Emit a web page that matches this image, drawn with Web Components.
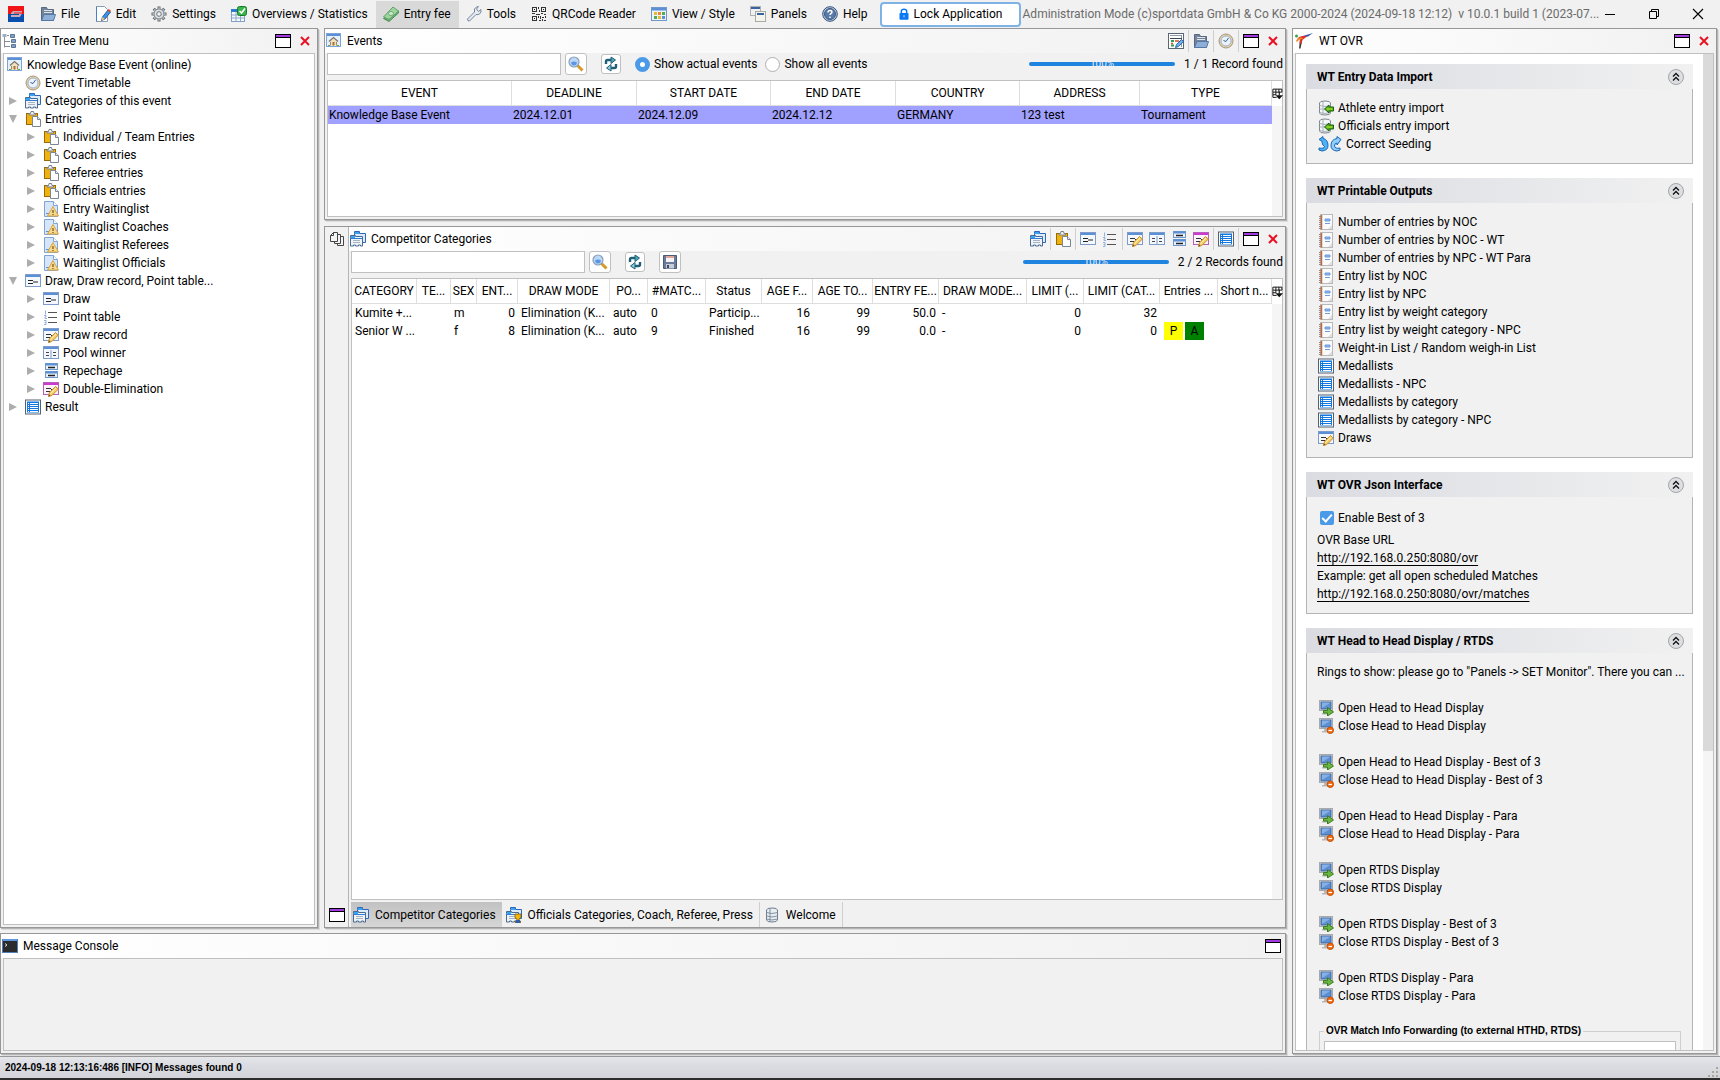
<!DOCTYPE html>
<html lang="en">
<head>
<meta charset="utf-8">
<title>Administration Mode</title>
<style>
  html, body { height: 100%; margin: 0; }
  body {
    --line: #c0c0c0;
    --face: #f1f1f1;
    --edge: #979797;
    font: 12px/18px Roboto, "Open Sans", sans-serif;
    color: #000;
    background: var(--face);
    overflow: hidden;
  }
  sd-app { height: 100%; }
</style>
</head>
<body>
<sd-app></sd-app>

<script>
const BASE = `
  * { box-sizing: border-box; }
  button, input { font: inherit; color: inherit; margin: 0; }
  button { border: 0; padding: 0; background: none; text-align: left; white-space: nowrap; }
`;

// shared icon parts, all on a 16x16 grid
const WIN = '<rect x=".5" y="1.5" width="15" height="12" fill="#f4f8fd" stroke="#7d9cc9"/><rect x="1" y="2" width="14" height="2" fill="#5b8fd6"/>';
const PENCIL = '<path d="M5.5 15.5l.8-3.6L12.5 5.5l2.8 2.6-6.4 6.4z" fill="#f6cf6a" stroke="#c78a28"/><path d="M7.5 12.5l5.5-5.5" stroke="#fff2bd"/><path d="M5.5 15.5l.5-2 1.5 1.3z" fill="#6b4a20"/>';
const FOLDERS = '<path d="M4.5 2.5v-2h5v2h6v9h-11z" fill="#dcebfa" stroke="#2f66b8"/><rect x="5" y="1" width="4" height="2" fill="#35a5f5"/><path d="M.5 6.5v-2h5v1h7v9.5h-2v-1h-2v1h-3v-1h-2v1h-3z" fill="#eef3f8" stroke="#4a6a93"/><rect x="1" y="5" width="4" height="2" fill="#35a5f5"/><path d="M1 7.5h11" stroke="#2f7fd6"/><path d="M3 9.5h7M3 11.5h7" stroke="#a9b4c0"/>';
const MONITOR = '<rect x="1.5" y=".5" width="13" height="10" fill="#e4e4e4" stroke="#a9a9a9"/><rect x="3" y="2" width="10" height="7" fill="#5d8fd3" stroke="#3f679f"/><path d="M4 8l8-5v-.5h-8z" fill="#86b0e6"/><path d="M6 11h4v2h2v1.5h-8v-1.5h2z" fill="#b8b8b8"/>';

const ICONS = {
  sd: '<rect width="16" height="8" fill="#f21414"/><rect width="16" height="8" y="8" fill="#0a4fb0"/><path d="M3 7l2-2h9v1.5h-8v1h8l-2 3.5h-9v-2h8v-1h-8z" fill="#c9a9b5"/>',
  folder: '<path d="M1.5 14.5v-13h5l1 2h6v11z" fill="#73849b" stroke="#56677f"/><path d="M4 4.5h8M4 6.5h8" stroke="#dfe5ec"/><path d="M1.5 14.5l2.5-6h11.5l-2 6z" fill="#8fb0d6" stroke="#5578a6"/>',
  edit: '<path d="M1.5 .5h8l3 3v12h-11z" fill="#fff" stroke="#8a9bb0"/><path d="M1.5 15.5v-15" stroke="#4a80c4"/><path d="M6.5 14.5l1-3.5 5.5-7 2.5 2-5.5 7z" fill="#3c93e8" stroke="#275c9e"/><path d="M12.5 4.5l1.2-1.5 2.3 1.8-1.2 1.5z" fill="#e2472c"/><path d="M6.5 14.5l1-3.5 2.5 2z" fill="#f1c27a"/>',
  gear: '<path d="M8 .5v15M.5 8h15M2.7 2.7l10.6 10.6M13.3 2.7L2.7 13.3" stroke="#5f666d" stroke-width="3"/><path d="M8 1.5v13M1.5 8h13M3.4 3.4l9.2 9.2M12.6 3.4l-9.2 9.2" stroke="#dfe3e6" stroke-width="1.4"/><circle cx="8" cy="8" r="5" fill="#dce0e4" stroke="#7d848b"/><circle cx="8" cy="8" r="2.3" fill="#f1f1f1" stroke="#6d747b"/>',
  stats: '<rect x=".5" y="3.5" width="13" height="12" fill="#f5f9fd" stroke="#7fa0c8"/><rect x="0" y="3" width="7" height="3" fill="#2e7ad0"/><path d="M1 9h13M1 12h13M5 6v9M9.5 6v9" stroke="#8fa9c6"/><rect x="6.5" y=".5" width="9" height="9" rx="2" fill="#39b54a" stroke="#157a28"/><path d="M8.5 5l2 2 3.5-4.5" fill="none" stroke="#fff" stroke-width="1.6"/>',
  money: '<path d="M.5 12.5L6 15.5l9.5-8.5v-2z" fill="#6fae76" stroke="#4a9157"/><path d="M.5 11L10 1l5.5 4L6 13.5z" fill="#9fd49e" stroke="#5fa067"/><ellipse cx="8" cy="7.5" rx="2.5" ry="2" fill="#cdeccb" stroke="#6fae76"/>',
  wrench: '<path d="M1.5 13l7-7q-1-3.5 2-5l2-.5-2 2.5 2 2.5 2.5-2q.5 3-1.5 4.5-1.5 1-3.5.5l-6.5 6.5q-2 .5-2-2z" fill="#e6ebf2" stroke="#76849a"/>',
  qr: '<g fill="none" stroke="#333"><rect x="1.5" y="1.5" width="4" height="4"/><rect x="10.5" y="1.5" width="4" height="4"/><rect x="1.5" y="10.5" width="4" height="4"/><path d="M7.5 1v2M8.5 4v2M1 7.5h3M5 8.5h4M10 7.5h2M13 8.5h2M7.5 10v2M9.5 10v3M11 11.5h2M14.5 10v2M8 14.5h2M11.5 13v2M13 14.5h2"/></g><path d="M3 3h1v1h-1zM12 3h1v1h-1zM3 12h1v1h-1z" fill="#222"/>',
  view: '<rect x=".5" y="1.5" width="15" height="13" fill="#eef4fb" stroke="#6f97cc"/><rect x="1" y="2" width="14" height="2.5" fill="#5b8fd6"/><path d="M3 6h3v3h-3zM7 10h3v3h-3z" fill="#e8b830"/><path d="M7 6h3v3h-3z" fill="#e58a3a"/><path d="M11 6h3v3h-3zM3 10h3v3h-3z" fill="#4fae56"/><path d="M11 10h3v3h-3z" fill="#5b90d8"/>',
  panels: '<rect x=".5" y=".5" width="10" height="9" fill="#eef1f4" stroke="#b0b0b0"/><rect x="1" y="1" width="9" height="2" fill="#3a64a0"/><rect x="5.5" y="5.5" width="10" height="10" fill="#f4f4ee" stroke="#a9a9a0"/><rect x="7" y="7" width="7" height="2" fill="#3a64a0"/>',
  help: '<circle cx="8" cy="8" r="7.3" fill="#c4ced9" stroke="#2f4f7e"/><circle cx="8" cy="8" r="5.5" fill="#5a7aa8" stroke="#3c5a88"/><path d="M6 6.5q0-2 2-2t2 1.500q0 1-1 1.500t-1 1.500M8 10.5v1.5" stroke="#fff" stroke-width="1.4" fill="none"/>',
  lock: '<path d="M4.500 7v-3q0-2.500 3.500-2.500t3.500 2.500v3" fill="none" stroke="#0a78f5" stroke-width="2"/><rect x="2" y="6.5" width="12" height="9" rx="1" fill="#0a78f5"/><path d="M8 9.5v3" stroke="#fff"/>',
  min: '<path d="M3 8.5h10" stroke="#000"/>',
  restore: '<path d="M3.5 5.5h7v7h-7zM5.5 5.5v-2h7v7h-2" fill="none" stroke="#000"/>',
  close: '<path d="M3 3l10 10M13 3L3 13" stroke="#000" stroke-width="1.1"/>',
  max: '<rect x=".5" y="1.5" width="15" height="13" fill="#fff" stroke="#000"/><rect x="1" y="2" width="14" height="2" fill="#a23be0"/><path d="M1 4.5h14" stroke="#000"/>',
  x: '<path d="M4 4l8 8M12 4l-8 8" stroke="#e81224" stroke-width="2"/>',
  tree: '<path d="M2.5 4v10.5M3 8.5h5M3 13.5h5M1 2.5h3" stroke="#8a9097" fill="none"/><path d="M.5 1h4v3h-4z" fill="#9db0c6"/><path d="M5 2.5h2" stroke="#8a9097"/><g fill="#7fa2cc" stroke="#5c7696"><path d="M8.5 1.5h4v3h-4zM9.5 6.5h4v3h-4zM9.5 11.5h4v3h-4z"/></g>',
  home: '<rect x=".5" y=".5" width="14" height="13" fill="#e4f0fb" stroke="#7da4d6"/><rect x="1" y="1" width="13" height="2" fill="#5b8fd6"/><path d="M4 8.5l3.5-3.5 3.5 3.5v4h-7z" fill="#f3e3bd"/><path d="M3 8.5l4.5-4 4.5 4" fill="none" stroke="#7f756d" stroke-width="1.3"/><path d="M4.5 9v3.5M10.5 9v3.5" stroke="#a9865a"/><path d="M6.5 9h2v3.5h-2z" fill="#a5713d"/><path d="M2 12.5h2M11 12.5h2" stroke="#67a844"/>',
  clock: '<circle cx="8" cy="8" r="7" fill="#e3d2ad" stroke="#a8977a"/><circle cx="8" cy="8" r="5" fill="#eaf3fc" stroke="#9fb4cc"/><path d="M8 8.5L10.5 5M8 8.5L5.5 7.5" stroke="#3d5f8e" fill="none"/>',
  folders: FOLDERS,
  officials: FOLDERS + '<path d="M9 7h6v3q-1 2-2 2v2h1.5v2h-5v-2h1.5v-2q-2 0-2-2z" fill="#f2b705" stroke="#6b4b00" stroke-width=".7"/><path d="M10 13h4v3h-4z" fill="#2b5fa8"/>',
  clipboard: '<rect x="1.5" y="2.5" width="11" height="11" fill="#eeb211" stroke="#9a6a08"/><path d="M4 4V2.5h1.5l.5-2h2.5l.5 2H10.5V4z" fill="#f2f2f2" stroke="#77808a"/><path d="M7.5 5.5h5l3 3v7h-8z" fill="#fff" stroke="#7d8794"/><path d="M12.5 5.5v3h3" fill="#e8ecf1" stroke="#7d8794"/>',
  warn: '<path d="M1.5 .5h9l4 4v11h-13z" fill="#d6e6f8" stroke="#7ea5d6"/><path d="M10.5 .5v4h4" fill="#fff" stroke="#7ea5d6"/><path d="M3 12.5h4" stroke="#5b90d8"/><path d="M10 5.5l5.5 9.5h-11z" fill="#f5d98f" stroke="#d9a441"/><path d="M10 9v3M10 13v1" stroke="#7a4f0d" stroke-width="1.2"/>',
  draw: WIN + '<path d="M3 7.5h5M3 10.5h5M8 9h5" stroke="#222" stroke-width="1.2"/>',
  points: '<path d="M5 3.5h9M5 8.5h9M5 13.5h9" stroke="#555"/><path d="M2.5 1.5v4M1 6.5h2v1.5h-1v1.5h2M1 11.5h2v4h-2M1.5 13.5h1.5" stroke="#8fb0e0" fill="none"/>',
  record: WIN + '<path d="M3 7.5h5M3 10.5h4M8 8.5h5" stroke="#333" stroke-width="1.2"/>' + PENCIL,
  pool: WIN + '<path d="M8 5v8.5" stroke="#7d9cc9"/><path d="M3 7.5h3M3 10.5h3M10 7.5h3M10 10.5h3" stroke="#444"/>',
  repechage: '<rect x="2.5" y=".5" width="12" height="6" fill="#eaf1fa" stroke="#6f97cc"/><rect x="2.5" y="8.5" width="12" height="6" fill="#eaf1fa" stroke="#6f97cc"/><path d="M3 1.5h11M3 9.5h11" stroke="#5b8fd6" stroke-width="2"/><path d="M5 4.5h7M5 12.5h7" stroke="#222" stroke-width="1.3"/>',
  double: '<rect x=".5" y="1.5" width="15" height="12" fill="#fbf4fb" stroke="#b65fb8"/><rect x="1" y="2" width="14" height="2" fill="#cc39cf"/><path d="M3 7.5h5M3 10.5h4M8 8.5h5" stroke="#333" stroke-width="1.2"/>' + PENCIL,
  result: '<rect x=".5" y="1" width="15" height="14" fill="#fff" stroke="#55616f"/><rect x="2" y="2.5" width="12" height="11" fill="#1277e0"/><path d="M5 4.5h8M5 6.5h8M5 8.5h8M5 10.5h8M5 12.5h8M3 4.5h1M3 6.5h1M3 8.5h1M3 10.5h1M3 12.5h1" stroke="#fff"/>',
  form: '<rect x=".5" y=".5" width="15" height="15" fill="#fff" stroke="#5c6670"/><path d="M2 2.5h12M13.5 2v12" stroke="#8d99a6"/><path d="M2 5.5h12" stroke="#3c4650"/><path d="M3 8h3M3 12.500h3" stroke="#31a048" stroke-width="2"/><path d="M3 10.5h2M7 8h4" stroke="#d94a35" stroke-width="1.500"/><path d="M7.5 14.500l1-3 5-5 2 2-5 5z" fill="#6db1f0" stroke="#2b62a8"/>',
  search: '<path d="M9.5 9.5l5 5" stroke="#d69a2a" stroke-width="3"/><circle cx="6" cy="6" r="5" fill="#b9d7f7" stroke="#8c9fb8" stroke-width="1.2"/><path d="M3 6.5q3-2 6 0q-.5 3-3 3t-3-3z" fill="#5b96e2"/>',
  refresh: '<path d="M3 8V5.5q0-1.5 1.5-1.5H9" fill="none" stroke="#1f6078" stroke-width="2.4"/><path d="M8 1l4.5 3L8 7.5z" fill="#4fa3b8" stroke="#1f6078"/><path d="M13 8v2.5q0 1.500-1.500 1.500H7" fill="none" stroke="#1f6078" stroke-width="2.4"/><path d="M8 8.5L3.5 12 8 15z" fill="#8fcbd8" stroke="#1f6078"/>',
  save: '<path d="M1.5 1.5h13v13h-13z" fill="#6b7c9a" stroke="#4a5b7a"/><rect x="4" y="2" width="8" height="6" fill="#f4f4f4"/><path d="M4 3h8" stroke="#d0563c"/><rect x="4" y="10" width="8" height="4.5" fill="#c9ced6"/><path d="M6 11v3" stroke="#374969" stroke-width="2"/>',
  dbimport: '<path d="M1.5 3q0-2 5.5-2t5.5 2v10q0 2-5.5 2t-5.5-2z" fill="#f4f5f7" stroke="#7d8790"/><path d="M1.5 5.5q5.5 2 11 0M1.5 9h11M1.5 12.5q5.5 2 11 0M5 2v12" fill="none" stroke="#a8b1ba"/><path d="M6.5 9l4.5-4v2h4.5v4h-4.500v2z" fill="#49b31a" stroke="#1d5f0b"/><path d="M8.5 9h6" stroke="#d5e632"/>',
  report: '<rect x="2.5" y=".5" width="12" height="15" fill="#fbfbfb" stroke="#b9b9b9"/><path d="M3.5 1v14.5" stroke="#c4683c" stroke-width="1.5"/><path d="M1 2.5h2M1 4.5h2M1 6.5h2M1 8.5h2M1 10.5h2M1 12.5h2M1 14.5h2" stroke="#8c8c8c"/><path d="M7 5h5v2h-5z" fill="#8fb2e6" stroke="#6f9ee0"/><path d="M7 9.5h5" stroke="#6f9ee0"/><path d="M14 11v4h-4z" fill="#dfdfdf"/>',
  monopen: MONITOR + '<path d="M5.5 10.5h4v-3l6 4.5-6 4v-3h-4z" fill="#6ab543" stroke="#3a7f1a"/>',
  monclose: MONITOR + '<circle cx="12.3" cy="12.3" r="3.2" fill="#ef6c12" stroke="#c64f06"/><path d="M10.5 12.5h3.5" stroke="#fff" stroke-width="1.2"/>',
  console: '<rect x=".5" y="1.5" width="15" height="13" fill="#2b2b2b" stroke="#4f7fb8"/><rect x="1" y="1" width="14" height="2" fill="#5f97dd"/><path d="M3 5.5l2 1.5-2 1.5" stroke="#ddd" fill="none"/>',
  pages: '<g fill="#f5f5f5" stroke="#444"><path d="M8.5 5.5h6v9h-6z"/><path d="M5.5 3.5h6v9h-6z"/><path d="M4.5 1.5h4v9h-7v-6z"/><path d="M1.5 4.5h3v-3" fill="none"/></g>',
  db: '<path d="M2.5 3q0-2 5.5-2t5.5 2v10q0 2-5.5 2t-5.5-2z" fill="#e8edf2" stroke="#6f7f90"/><path d="M2.5 5.5q5.5 2 11 0M2.5 9q5.5 2 11 0M2.5 12q5.5 2 11 0M6 1.5v13" fill="none" stroke="#8291a2"/>',
  chevrons: '<circle cx="8" cy="8" r="7.5" fill="#dcdee2" stroke="#a5a5a8"/><path d="M5 7.5l3-3 3 3M5 11.5l3-3 3 3" fill="none" stroke="#111" stroke-width="1.3"/>',
  seeding: '<path d="M1 3.5l4-3v2q5 1 5 7 0 5-6 5.5l-3-1v-2q5 1 5.5-1.5-2-1-2.5-4v-1.5z" fill="#4fb2f5" stroke="#1766b8"/><path d="M23 3.5l-4-3v2q-6 1-6 7 0 5 6 5.5l3-1v-2q-5 1-5.5-2 0-3 2.5-3v2z" fill="#8fd0fb" stroke="#1766b8"/>',
  wt: '<path d="M7 3.5L19 0l-5 3.5-5 1z" fill="#3a55a5"/><path d="M3 5.5q3-3 7-2.5l3 .5-4 3z" fill="#e0312c"/><path d="M2 8q2-4 6-3.5L9 6Q5 6 3 9z" fill="#f08a1d"/><path d="M8.5 6L6.5 15.5H5L6 7z" fill="#3d3836"/><path d="M6 6.5l2.5-.5-1 4.5-2 .5z" fill="#e0312c"/><circle cx="2.5" cy="3" r="1.5" fill="#39a34a"/>',
  colmenu: '<path d="M2.5 1.5h12v4h-12zM6.5 1.5v8M10.5 1.5v4M2.5 5.5v7h5M2.5 9h4" fill="none" stroke="#111" stroke-width="1.3"/><path d="M6 9.5h10l-5 5.5z" fill="#111"/><path d="M11 5v5" stroke="#111" stroke-width="1.5"/>'
};
const WIDE = { seeding: 24, wt: 20 };

class SdIcon extends HTMLElement {
  constructor() {
    super();
    this.attachShadow({ mode: 'open' });
  }

  connectedCallback() {
    const name = this.getAttribute('name');
    const width = WIDE[name] || 16;
    this.shadowRoot.innerHTML = `
      <style>
        :host { display: block; flex: none; width: ${width}px; height: 16px; }
        :host([size="small"]) { width: 12px; height: 14px; }
        svg { display: block; width: 100%; height: 100%; }
      </style>
      <svg viewBox="0 0 ${width} 16" fill="none" aria-hidden="true">${ICONS[name]}</svg>
    `;
  }
}
customElements.define('sd-icon', SdIcon);

class MenuItem extends HTMLElement {
  constructor() {
    super();
    this.attachShadow({ mode: 'open' });
  }

  connectedCallback() {
    this.shadowRoot.innerHTML = `
      <style>
        ${BASE}
        :host { display: block; flex: none; }
        button { display: flex; align-items: center; gap: 5px; height: 27px; padding: 0 8px 0 7px; }
        :host([active]) button { background: #d9d9d9; }
      </style>
      <button type="button"><sd-icon name="${this.getAttribute('icon')}"></sd-icon><slot></slot></button>
    `;
  }
}
customElements.define('menu-item', MenuItem);

class MenuBar extends HTMLElement {
  constructor() {
    super();
    this.attachShadow({ mode: 'open' });
  }

  connectedCallback() {
    this.shadowRoot.innerHTML = `
      <style>
        ${BASE}
        :host { display: flex; align-items: center; height: 28px; }
        .logo { margin: 0 9px 0 8px; }
        .lock {
          display: flex; align-items: center; justify-content: center; gap: 4px; flex: none;
          width: 141px; height: 25px; margin-left: 4px;
          border: 2px solid #7fb3e6; border-radius: 4px; background: #fff;
        }
        .mode { flex: 1; min-width: 0; padding-left: 2px; color: #6b6b6b; white-space: pre; overflow: hidden; }
        .window { display: flex; flex: none; gap: 28px; padding-right: 14px; }
      </style>
      <sd-icon class="logo" name="sd"></sd-icon>
      <menu-item icon="folder">File</menu-item>
      <menu-item icon="edit">Edit</menu-item>
      <menu-item icon="gear">Settings</menu-item>
      <menu-item icon="stats">Overviews / Statistics</menu-item>
      <menu-item icon="money" active>Entry fee</menu-item>
      <menu-item icon="wrench">Tools</menu-item>
      <menu-item icon="qr">QRCode Reader</menu-item>
      <menu-item icon="view">View / Style</menu-item>
      <menu-item icon="panels">Panels</menu-item>
      <menu-item icon="help">Help</menu-item>
      <button type="button" class="lock"><sd-icon size="small" name="lock"></sd-icon>Lock Application</button>
      <span class="mode">Administration Mode (c)sportdata GmbH &amp; Co KG 2000-2024 (2024-09-18 12:12)  v 10.0.1 build 1 (2023-07...</span>
      <div class="window">
        <button type="button" aria-label="Minimize"><sd-icon name="min"></sd-icon></button>
        <button type="button" aria-label="Restore"><sd-icon name="restore"></sd-icon></button>
        <button type="button" aria-label="Close"><sd-icon name="close"></sd-icon></button>
      </div>
    `;
  }
}
customElements.define('menu-bar', MenuBar);

// tools="a b | c" : icon buttons, a bar draws a separator
class DockPanel extends HTMLElement {
  constructor() {
    super();
    this.attachShadow({ mode: 'open' });
  }

  connectedCallback() {
    const tools = (this.getAttribute('tools') || '').split(' ').filter(Boolean)
      .map((t) => t === '|' ? '<i></i>' : `<button type="button" aria-label="${t}"><sd-icon name="${t}"></sd-icon></button>`)
      .join('');
    this.shadowRoot.innerHTML = `
      <style>
        ${BASE}
        :host {
          display: flex; min-width: 0; min-height: 0;
          border: 1px solid var(--edge);
          box-shadow: 1px 1px 0 #b4b4b4, 2px 2px 0 #dcdcdc;
          background: var(--face);
        }
        .main { display: flex; flex-direction: column; flex: 1; min-width: 0; }
        header {
          display: flex; align-items: center; flex: none; height: 24px; padding: 0 1px;
          background: linear-gradient(90deg, #fff, var(--face));
        }
        h2 { flex: 1; margin: 0 0 0 5px; font: inherit; white-space: nowrap; }
        header button { padding: 0 3px; }
        header i { width: 1px; height: 22px; margin: 0 1px; background: #cfcfcf; }
        .body { display: flex; flex-direction: column; flex: 1; min-height: 0; padding: 0 2px 2px; }
      </style>
      <slot name="side"></slot>
      <div class="main">
        <header>
          <sd-icon name="${this.getAttribute('icon')}"></sd-icon>
          <h2>${this.getAttribute('label')}</h2>
          ${tools}
        </header>
        <div class="body"><slot></slot></div>
      </div>
    `;
  }
}
customElements.define('dock-panel', DockPanel);

class TreeItem extends HTMLElement {
  constructor() {
    super();
    this.attachShadow({ mode: 'open' });
  }

  connectedCallback() {
    const level = Number(this.getAttribute('level') || 0);
    const state = this.getAttribute('state');
    const arrow = state
      ? `<button type="button" aria-label="Toggle"><svg width="8" height="10" viewBox="0 0 8 10"><path d="${state === 'open' ? 'M0 1h8l-4 8z' : 'M0 1l8 4-8 4z'}" fill="#adadad"/></svg></button>`
      : '<span class="gap"></span>';
    this.shadowRoot.innerHTML = `
      <style>
        ${BASE}
        :host { display: flex; align-items: center; height: 18px; padding-left: ${level * 18 - 13}px; white-space: nowrap; }
        :host([level="0"]) { padding-left: 3px; }
        :host([level="0"]) .gap { display: none; }
        button, .gap { display: flex; align-items: center; width: 16px; height: 18px; }
        sd-icon { margin-right: 4px; }
      </style>
      ${arrow}<sd-icon name="${this.getAttribute('icon')}"></sd-icon><span><slot></slot></span>
    `;
  }
}
customElements.define('tree-item', TreeItem);

class MainTree extends HTMLElement {
  constructor() {
    super();
    this.attachShadow({ mode: 'open' });
  }

  connectedCallback() {
    const rows = [
      [0, 'home', '', 'Knowledge Base Event (online)'],
      [1, 'clock', '', 'Event Timetable'],
      [1, 'folders', 'closed', 'Categories of this event'],
      [1, 'clipboard', 'open', 'Entries'],
      [2, 'clipboard', 'closed', 'Individual / Team Entries'],
      [2, 'clipboard', 'closed', 'Coach entries'],
      [2, 'clipboard', 'closed', 'Referee entries'],
      [2, 'clipboard', 'closed', 'Officials entries'],
      [2, 'warn', 'closed', 'Entry Waitinglist'],
      [2, 'warn', 'closed', 'Waitinglist Coaches'],
      [2, 'warn', 'closed', 'Waitinglist Referees'],
      [2, 'warn', 'closed', 'Waitinglist Officials'],
      [1, 'draw', 'open', 'Draw, Draw record, Point table...'],
      [2, 'draw', 'closed', 'Draw'],
      [2, 'points', 'closed', 'Point table'],
      [2, 'record', 'closed', 'Draw record'],
      [2, 'pool', 'closed', 'Pool winner'],
      [2, 'repechage', 'closed', 'Repechage'],
      [2, 'double', 'closed', 'Double-Elimination'],
      [1, 'result', 'closed', 'Result']
    ];
    this.shadowRoot.innerHTML = `
      <style>
        ${BASE}
        :host { display: block; flex: 1; padding: 2px 0; border: 1px solid var(--line); background: #fff; overflow: hidden; }
      </style>
      ${rows.map(([level, icon, state, text]) => `<tree-item level="${level}" icon="${icon}" state="${state}">${text}</tree-item>`).join('')}
    `;
  }
}
customElements.define('main-tree', MainTree);

class SearchBar extends HTMLElement {
  constructor() {
    super();
    this.attachShadow({ mode: 'open' });
  }

  connectedCallback() {
    this.shadowRoot.innerHTML = `
      <style>
        ${BASE}
        :host { display: flex; align-items: center; flex: none; height: 22px; white-space: nowrap; }
        input { width: 234px; height: 22px; padding: 0 4px; border: 1px solid var(--line); background: #fff; outline: 0; }
        button {
          display: flex; align-items: center; justify-content: center;
          width: 22px; height: 22px; margin-left: 14px;
          border: 1px solid var(--line); border-radius: 3px; background: #fff;
        }
        .find { margin-left: 4px; }
        .narrow { width: 20px; height: 20px; }
        ::slotted(*) { margin-left: 14px; }
        .bar {
          width: 146px; height: 4px; margin-left: auto; border-radius: 2px;
          background: #1f83e0; color: var(--face); font-size: 10px; line-height: 4px; text-align: center;
        }
        .count { margin-left: 9px; }
      </style>
      <input type="text" aria-label="Search">
      <button type="button" class="find" aria-label="Find"><sd-icon name="search"></sd-icon></button>
      <button type="button" class="narrow" aria-label="Refresh"><sd-icon name="refresh"></sd-icon></button>
      ${this.hasAttribute('save') ? '<button type="button" aria-label="Save"><sd-icon name="save"></sd-icon></button>' : ''}
      <slot></slot>
      <div class="bar">100%</div>
      <span class="count">${this.getAttribute('count')}</span>
    `;
  }
}
customElements.define('search-bar', SearchBar);

class EventFilter extends HTMLElement {
  constructor() {
    super();
    this.attachShadow({ mode: 'open' });
  }

  connectedCallback() {
    this.shadowRoot.innerHTML = `
      <style>
        ${BASE}
        :host { display: flex; gap: 8px; }
        label { display: flex; align-items: center; gap: 4px; }
        input { appearance: none; width: 15px; height: 15px; border: 1px solid #b0b0b0; border-radius: 50%; background: #fff; }
        input:checked { border: 5px solid #4a9ae8; }
      </style>
      <label><input type="radio" name="scope" checked>Show actual events</label>
      <label><input type="radio" name="scope">Show all events</label>
    `;
  }
}
customElements.define('event-filter', EventFilter);

// column: [title, width, align]
const TABLES = {
  events: {
    cols: [['EVENT', 184], ['DEADLINE', 125], ['START DATE', 134], ['END DATE', 125], ['COUNTRY', 124], ['ADDRESS', 120], ['TYPE', 132]],
    rows: [['Knowledge Base Event', '2024.12.01', '2024.12.09', '2024.12.12', 'GERMANY', '123 test', 'Tournament']]
  },
  categories: {
    cols: [['CATEGORY', 65], ['TE...', 34], ['SEX', 26], ['ENT...', 41, 'r'], ['DRAW MODE', 92], ['PO...', 38], ['#MATC...', 58], ['Status', 56],
      ['AGE F...', 51, 'r'], ['AGE TO...', 60, 'r'], ['ENTRY FE...', 66, 'r'], ['DRAW MODE...', 88], ['LIMIT (...', 57, 'r'], ['LIMIT (CAT...', 76, 'r'], ['Entries ...', 58], ['Short n...', 54]],
    rows: [
      ['Kumite +...', '', 'm', '0', 'Elimination (K...', 'auto', '0', 'Particip...', '16', '99', '50.0', '-', '0', '32', '', ''],
      ['Senior W ...', '', 'f', '8', 'Elimination (K...', 'auto', '9', 'Finished', '16', '99', '0.0', '-', '0', '0', '<b class="p">P</b><b class="a">A</b>', '']
    ]
  }
};

class DataTable extends HTMLElement {
  constructor() {
    super();
    this.attachShadow({ mode: 'open' });
  }

  connectedCallback() {
    const { cols, rows } = TABLES[this.getAttribute('source')];
    const head = cols.map(([title, width]) => `<th scope="col" style="width: ${width}px">${title}</th>`).join('');
    const body = rows.map((row) => `<tr>${row.map((cell, i) => `<td class="${cols[i][2] || ''}">${cell}</td>`).join('')}</tr>`).join('');
    this.shadowRoot.innerHTML = `
      <style>
        ${BASE}
        :host { display: flex; align-items: stretch; flex: 1; min-height: 0; border: 1px solid var(--line); background: #fff; }
        .scroll { flex: 1; min-width: 0; overflow: hidden; }
        table { width: 100%; table-layout: fixed; border-collapse: separate; border-spacing: 0; }
        th { height: 25px; padding: 0; border-right: 1px solid #dedede; border-bottom: 1px solid #dedede; font-weight: normal; white-space: nowrap; }
        td { height: 18px; padding: 0 3px; line-height: 18px; white-space: nowrap; }
        .r { text-align: right; }
        :host([source="events"]) td { padding: 0 1px; background: #a0a0ff; }
        b { display: inline-block; height: 18px; width: 19px; margin: 0 1px; font-weight: normal; text-align: center; }
        .p { background: #ff0; }
        .a { background: #008000; }
        .track { flex: none; width: 10px; background: #f5f5f5; }
        .track button { display: flex; align-items: center; justify-content: center; width: 10px; height: 25px; background: #fff; }
      </style>
      <div class="scroll"><table><thead><tr>${head}</tr></thead><tbody>${body}</tbody></table></div>
      <div class="track"><button type="button" aria-label="Columns"><sd-icon size="small" name="colmenu"></sd-icon></button></div>
    `;
  }
}
customElements.define('data-table', DataTable);

class EditorTabs extends HTMLElement {
  constructor() {
    super();
    this.attachShadow({ mode: 'open' });
  }

  connectedCallback() {
    this.shadowRoot.innerHTML = `
      <style>
        ${BASE}
        :host { display: flex; flex: none; padding-top: 2px; margin-bottom: -2px; }
        button { display: flex; align-items: center; gap: 6px; height: 25px; padding: 0 6px 0 2px; margin-right: 2px; border-right: 1px solid #cfcfcf; }
        .on { background: linear-gradient(#c2c2c2, #d6d6d6); border: 0; }
      </style>
      <button type="button" class="on"><sd-icon name="folders"></sd-icon>Competitor Categories</button>
      <button type="button"><sd-icon name="officials"></sd-icon>Officials Categories, Coach, Referee, Press</button>
      <button type="button"><sd-icon name="db"></sd-icon>Welcome</button>
    `;
  }
}
customElements.define('editor-tabs', EditorTabs);

class SideStrip extends HTMLElement {
  constructor() {
    super();
    this.attachShadow({ mode: 'open' });
  }

  connectedCallback() {
    this.shadowRoot.innerHTML = `
      <style>
        ${BASE}
        :host { display: flex; flex-direction: column; justify-content: space-between; flex: none; width: 24px; padding: 4px; border-right: 1px solid #b4b4b4; }
      </style>
      <button type="button" aria-label="Pages"><sd-icon name="pages"></sd-icon></button>
      <button type="button" aria-label="Restore"><sd-icon name="max"></sd-icon></button>
    `;
  }
}
customElements.define('side-strip', SideStrip);

class TaskGroup extends HTMLElement {
  constructor() {
    super();
    this.attachShadow({ mode: 'open' });
  }

  connectedCallback() {
    this.shadowRoot.innerHTML = `
      <style>
        ${BASE}
        :host { display: block; flex: none; }
        header { display: flex; align-items: center; height: 25px; padding: 0 9px 0 11px; background: linear-gradient(90deg, #dadce2, #f1f1f1); }
        h3 { flex: 1; margin: 0; font-size: 12px; line-height: 18px; font-weight: bold; }
        .body { padding: 10px; border: 1px solid #b4b4b4; border-top: 0; background: var(--face); }
      </style>
      <header><h3>${this.getAttribute('label')}</h3><button type="button" aria-label="Collapse"><sd-icon name="chevrons"></sd-icon></button></header>
      <div class="body"><slot></slot></div>
    `;
  }
}
customElements.define('task-group', TaskGroup);

class TaskItem extends HTMLElement {
  constructor() {
    super();
    this.attachShadow({ mode: 'open' });
  }

  connectedCallback() {
    this.shadowRoot.innerHTML = `
      <style>
        ${BASE}
        :host { display: block; }
        :host([last]) { margin-bottom: 18px; }
        button { display: flex; align-items: center; gap: 4px; height: 18px; padding-left: 1px; }
      </style>
      <button type="button"><sd-icon name="${this.getAttribute('icon')}"></sd-icon><slot></slot></button>
    `;
  }
}
customElements.define('task-item', TaskItem);

class TaskPane extends HTMLElement {
  constructor() {
    super();
    this.attachShadow({ mode: 'open' });
  }

  connectedCallback() {
    const items = (icon, list) => list.map((t) => `<task-item icon="${icon}">${t}</task-item>`).join('');
    const displays = ['Head to Head Display', 'Head to Head Display - Best of 3', 'Head to Head Display - Para',
      'RTDS Display', 'RTDS Display - Best of 3', 'RTDS Display - Para'];
    this.shadowRoot.innerHTML = `
      <style>
        ${BASE}
        :host { display: flex; flex: 1; min-height: 0; border: 1px solid var(--line); background: #fff; }
        .list { display: flex; flex-direction: column; gap: 14px; flex: 1; min-width: 0; padding: 10px; overflow: hidden; }
        .track { flex: none; width: 10px; background: #f5f5f5; }
        .thumb { height: 70%; background: #dadada; }
        label.check { display: flex; align-items: center; gap: 4px; margin: 0 0 4px 3px; padding-top: 2px; }
        .check input { appearance: none; width: 14px; height: 14px; border-radius: 2px; background: #4a9ae8; display: grid; place-content: center; }
        .check input:checked::after { content: ""; width: 8px; height: 4px; border: solid #fff; border-width: 0 0 2px 2px; transform: rotate(-48deg); margin-bottom: 3px; }
        a { color: #000; text-decoration: underline; text-underline-offset: 3px; }
        p { margin: 0; white-space: nowrap; }
        .hint { margin-bottom: 18px; }
        fieldset { margin: 8px 0 0 2px; padding: 2px 4px; border: 1px solid #cfcfcf; width: 362px; max-width: 100%; }
        legend { padding: 0 2px; font: bold 10px/16px "Liberation Sans", sans-serif; }
        fieldset input { display: block; width: 100%; height: 22px; border: 1px solid var(--line); background: #fff; }
      </style>
      <div class="list">
        <task-group label="WT Entry Data Import">
          ${items('dbimport', ['Athlete entry import', 'Officials entry import'])}
          <task-item icon="seeding">Correct Seeding</task-item>
        </task-group>
        <task-group label="WT Printable Outputs">
          ${items('report', ['Number of entries by NOC', 'Number of entries by NOC - WT', 'Number of entries by NPC - WT Para', 'Entry list by NOC',
            'Entry list by NPC', 'Entry list by weight category', 'Entry list by weight category - NPC', 'Weight-in List / Random weigh-in List'])}
          ${items('result', ['Medallists', 'Medallists - NPC', 'Medallists by category', 'Medallists by category - NPC'])}
          <task-item icon="record">Draws</task-item>
        </task-group>
        <task-group label="WT OVR Json Interface">
          <label class="check"><input type="checkbox" checked>Enable Best of 3</label>
          <p>OVR Base URL</p>
          <p><a href="#ovr">http://192.168.0.250:8080/ovr</a></p>
          <p>Example: get all open scheduled Matches</p>
          <p><a href="#matches">http://192.168.0.250:8080/ovr/matches</a></p>
        </task-group>
        <task-group label="WT Head to Head Display / RTDS">
          <p class="hint">Rings to show: please go to "Panels -&gt; SET Monitor". There you can ...</p>
          ${displays.map((d) => `<task-item icon="monopen">Open ${d}</task-item><task-item icon="monclose" last>Close ${d}</task-item>`).join('')}
          <fieldset>
            <legend>OVR Match Info Forwarding (to external HTHD, RTDS)</legend>
            <input type="text" aria-label="OVR Match Info Forwarding">
          </fieldset>
        </task-group>
      </div>
      <div class="track"><div class="thumb"></div></div>
    `;
  }
}
customElements.define('task-pane', TaskPane);

class StatusBar extends HTMLElement {
  constructor() {
    super();
    this.attachShadow({ mode: 'open' });
  }

  connectedCallback() {
    this.shadowRoot.innerHTML = `
      <style>
        :host {
          display: flex; align-items: center; justify-content: space-between; flex: none;
          box-sizing: border-box; height: 24px; padding: 1px 0 0 5px;
          border-top: 1px solid var(--edge); border-bottom: 2px solid #2c2c2c;
          background: linear-gradient(#e6e7ea, #dcdee4 30%, #d2d4d9);
          font: bold 10px/16px "Liberation Sans", sans-serif;
        }
        svg { align-self: flex-end; }
      </style>
      <span><slot></slot></span>
      <svg width="12" height="12" fill="#a9a79a"><path d="M8 1h2v2h-2zM4 5h2v2h-2zM8 5h2v2h-2zM0 9h2v2h-2zM4 9h2v2h-2zM8 9h2v2h-2z"/></svg>
    `;
  }
}
customElements.define('status-bar', StatusBar);

class SdApp extends HTMLElement {
  constructor() {
    super();
    this.attachShadow({ mode: 'open' });
  }

  connectedCallback() {
    this.shadowRoot.innerHTML = `
      <style>
        ${BASE}
        :host { display: flex; flex-direction: column; }
        .desk {
          display: grid; flex: 1; min-height: 0; gap: 5px 6px; padding: 0 3px 2px 0;
          grid-template-columns: 318px minmax(0, 1fr) 425px;
          grid-template-rows: minmax(0, 1fr) 121px;
        }
        .center { display: grid; grid-template-rows: 192px minmax(0, 1fr); gap: 6px; min-height: 0; min-width: 0; }
        .console { grid-column: 1 / 3; grid-row: 2; }
        .ovr { grid-column: 3; grid-row: 1 / 3; }
        .messages { flex: 1; border: 1px solid var(--line); }
        .center data-table { margin-top: 5px; }
      </style>
      <menu-bar></menu-bar>
      <div class="desk">
        <dock-panel icon="tree" label="Main Tree Menu" tools="max x"><main-tree></main-tree></dock-panel>
        <div class="center">
          <dock-panel icon="home" label="Events" tools="form | folder | clock | max x">
            <search-bar count="1 / 1 Record found"><event-filter></event-filter></search-bar>
            <data-table source="events"></data-table>
          </dock-panel>
          <dock-panel icon="folders" label="Competitor Categories" tools="folders | clipboard | draw points | record pool repechage double | result | max x">
            <side-strip slot="side"></side-strip>
            <search-bar save count="2 / 2 Records found"></search-bar>
            <data-table source="categories"></data-table>
            <editor-tabs></editor-tabs>
          </dock-panel>
        </div>
        <dock-panel class="ovr" icon="wt" label="WT OVR" tools="max x"><task-pane></task-pane></dock-panel>
        <dock-panel class="console" icon="console" label="Message Console" tools="max"><div class="messages"></div></dock-panel>
      </div>
      <status-bar>2024-09-18 12:13:16:486 [INFO] Messages found 0</status-bar>
    `;
  }
}
customElements.define('sd-app', SdApp);
</script>
</body>
</html>
